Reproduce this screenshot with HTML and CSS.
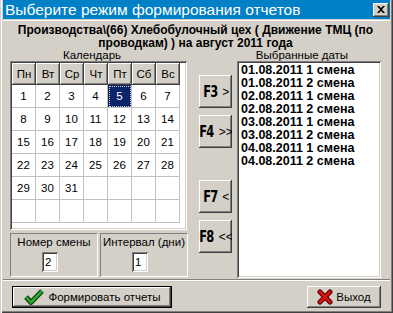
FILE: index.html
```html
<!DOCTYPE html>
<html lang="ru">
<head>
  <meta charset="UTF-8" />
  <title>Выберите режим формирования отчетов</title>
  <link rel="stylesheet" href="styles.css">
</head>
<body>

<div class="window">
  <div class="titlebar">
    <span class="title">Выберите режим формирования отчетов</span>
    <span class="close">
      <svg width="8" height="7" viewBox="0 0 8 7"><path d="M0 0h2l2 2 2-2h2L5 3.5 8 7H6L4 5 2 7H0l3-3.5z" fill="#000"/></svg>
    </span>
  </div>

  <div class="content">
    <div class="heading">Производства\(66) Хлебобулочный цех ( Движение ТМЦ (по<br>проводкам) ) на август 2011 года</div>

    <div class="main">
      <div class="left">
        <div class="caption">Календарь</div>
        <div class="calendar">
          <div class="grid" id="grid">
            <div class="wd">Пн</div><div class="wd">Вт</div><div class="wd">Ср</div><div class="wd">Чт</div>
            <div class="wd">Пт</div><div class="wd">Сб</div><div class="wd">Вс</div>
          </div>
        </div>
        <div class="params">
          <div class="param">
            <div class="param-label">Номер смены</div>
            <div class="field">2</div>
          </div>
          <div class="param">
            <div class="param-label">Интервал (дни)</div>
            <div class="field">1</div>
          </div>
        </div>
      </div>

      <div class="moves">
        <div class="btn move"><b>F3</b><span>&gt;</span></div>
        <div class="btn move"><b>F4</b><span>&gt;&gt;</span></div>
        <div class="btn move gap"><b>F7</b><span>&lt;</span></div>
        <div class="btn move"><b>F8</b><span>&lt;&lt;</span></div>
      </div>

      <div class="right">
        <div class="caption">Выбранные даты</div>
        <div class="list" id="list"></div>
      </div>
    </div>
  </div>

  <div class="sep"></div>

  <div class="footer">
    <div class="btn default">
      <svg width="22" height="18" viewBox="0 0 22 18">
        <polyline points="3,9 8,14.5 19,3" fill="none" stroke="#0b3d0b" stroke-width="5" stroke-linejoin="round"/>
        <polyline points="3,9 8,14.5 19,3" fill="none" stroke="#2ea82e" stroke-width="2.6" stroke-linejoin="round"/>
      </svg>
      <span>Формировать отчеты</span>
    </div>
    <div class="btn exit">
      <svg width="16" height="16" viewBox="0 0 16 16">
        <path d="M3 3l10 10M13 3L3 13" stroke="#4a0000" stroke-width="5" stroke-linecap="round"/>
        <path d="M3 3l10 10M13 3L3 13" stroke="#d81010" stroke-width="3" stroke-linecap="round"/>
      </svg>
      <span>Выход</span>
    </div>
  </div>
</div>

<script>
const grid = document.getElementById('grid');
for (let i = 0; i < 42; i++) {
  const d = document.createElement('div');
  d.className = 'day';
  if (i < 31) d.textContent = i + 1;
  if (i === 4) d.classList.add('sel');
  grid.appendChild(d);
}

const list = document.getElementById('list');
['01', '02', '03', '04'].forEach(day => {
  [1, 2].forEach(smena => {
    const row = document.createElement('div');
    row.textContent = `${day}.08.2011 ${smena} смена`;
    list.appendChild(row);
  });
});
</script>

</body>
</html>
```

FILE: styles.css
```css
body {
  margin: 0;
  font-family: "Liberation Sans", Arial, sans-serif;
  font-size: 11.5px;
  color: #000;
}
.window {
  width: 393px;
  height: 313px;
  box-sizing: border-box;
  padding: 0 3px 3px;
  background: #d4d0c8;
  box-shadow: inset 1px 0 #d4d0c8, inset 2px 0 #fff, inset -1px -1px #404040, inset -2px -2px #808080;
  overflow: hidden;
}
.titlebar {
  height: 19px;
  background: #0080c6;
  color: #fff;
  display: flex;
  align-items: center;
  justify-content: space-between;
  padding-left: 2px;
}
.title {
  font-size: 15.5px;
  line-height: 19px;
}
.close {
  width: 16px;
  height: 14px;
  margin-right: 1px;
  background: #d4d0c8;
  box-shadow: inset -1px -1px #404040, inset 1px 1px #fff, inset -2px -2px #808080;
  display: flex;
  align-items: center;
  justify-content: center;
}
.content {
  margin-top: 1px;
  border-top: 1px solid #fff;
  padding: 0 9px 0 7px;
}
.heading {
  font-size: 12px;
  font-weight: bold;
  text-align: center;
  line-height: 13px;
  margin-top: 3px;
  white-space: nowrap;
}
.main {
  display: flex;
}
.caption {
  line-height: 11px;
  height: 11px;
  text-align: center;
  padding-right: 14px;
}
.left {
  width: 178px;
}
.calendar {
  width: 177px;
  height: 169px;
  box-sizing: border-box;
  padding: 2px;
  background: #fff;
  box-shadow: inset 1px 1px #808080, inset -1px -1px #fff, inset 2px 2px #404040, inset -2px -2px #d4d0c8;
}
.grid {
  display: grid;
  grid-template-columns: repeat(7, 24px);
}
.wd {
  height: 22px;
  line-height: 22px;
  text-align: center;
  background: #d4d0c8;
  box-shadow: inset -1px -1px #404040, inset 1px 1px #fff, inset -2px -2px #808080;
}
.day {
  height: 23px;
  line-height: 22px;
  text-align: center;
  box-sizing: border-box;
  border-right: 1px solid #c0c0c0;
  border-bottom: 1px solid #c0c0c0;
}
.day.sel {
  background: #0a246a;
  color: #fff;
  outline: 1px dotted #d4d0c8;
  outline-offset: -2px;
}
.params {
  display: flex;
  gap: 2px;
  margin-top: 3px;
}
.param {
  width: 88px;
  height: 44px;
  box-sizing: border-box;
  border: 1px solid;
  border-color: #808080 #fff #fff #808080;
  padding-top: 2px;
  display: flex;
  flex-direction: column;
  align-items: center;
}
.param-label {
  line-height: 13px;
  white-space: nowrap;
}
.field {
  width: 16px;
  height: 20px;
  box-sizing: border-box;
  margin: 3px 8px 0 0;
  padding: 3px 0 0 3px;
  line-height: 14px;
  background: #fff;
  box-shadow: inset 1px 1px #808080, inset -1px -1px #fff, inset 2px 2px #404040, inset -2px -2px #d4d0c8;
}
.btn {
  background: #d4d0c8;
  box-shadow: inset -1px -1px #404040, inset 1px 1px #fff, inset -2px -2px #808080;
  display: flex;
  align-items: center;
  justify-content: center;
  box-sizing: border-box;
  overflow: hidden;
  white-space: nowrap;
}
.moves {
  width: 33px;
  margin-left: 11px;
  padding-top: 25px;
  display: flex;
  flex-direction: column;
  gap: 7px;
}
.move {
  height: 33px;
  gap: 4px;
}
.move b {
  font-family: "DejaVu Sans", sans-serif;
  font-stretch: condensed;
  font-size: 15px;
  letter-spacing: -1px;
  transform: scaleX(0.85);
}
.move span {
  font-size: 12px;
}
.move.gap {
  margin-top: 25px;
}
.right {
  margin-left: 5px;
  width: 144px;
}
.list {
  height: 217px;
  box-sizing: border-box;
  padding: 3px 4px;
  background: #fff;
  font-size: 12.5px;
  font-weight: bold;
  line-height: 13px;
  box-shadow: inset 1px 1px #808080, inset -1px -1px #fff, inset 2px 2px #404040, inset -2px -2px #d4d0c8;
}
.sep {
  margin-top: 1px;
  border-top: 1px solid #808080;
  border-bottom: 1px solid #fff;
}
.footer {
  display: flex;
  justify-content: space-between;
  padding: 5px 9px 0 9px;
}
.footer .btn {
  height: 22px;
  gap: 3px;
}
.default {
  width: 160px;
  border: 1px solid #000;
}
.exit {
  width: 74px;
  gap: 5px;
}
```
